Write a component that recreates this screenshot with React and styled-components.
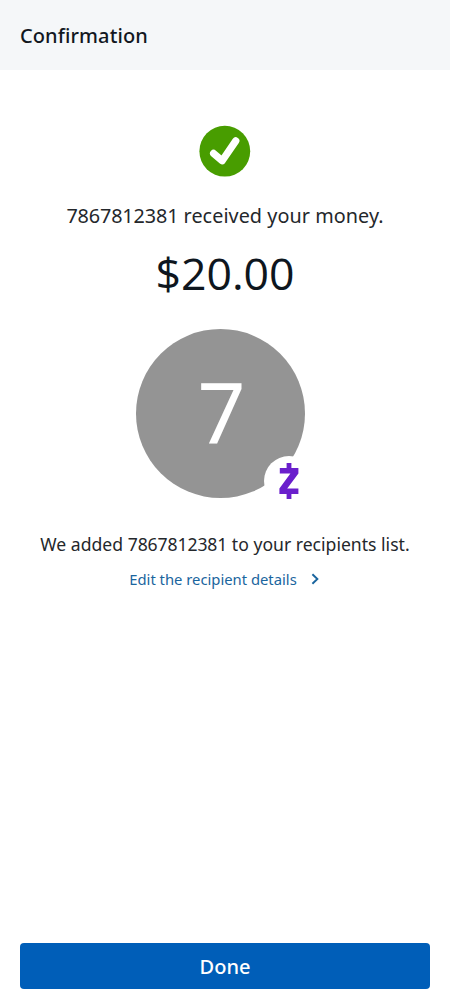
import styled, { createGlobalStyle } from 'styled-components';

export default function App() {
    return (
        <Screen>
            <GlobalStyle />

            <Header>
                <Title>Confirmation</Title>
            </Header>

            <Content>
                <CheckIcon />

                <Message>
                    <Phone>7867812381</Phone> received your money.
                </Message>
                <Amount>$20.00</Amount>

                <Avatar>
                    <Initial>7</Initial>
                    <Badge>
                        <ZelleIcon />
                    </Badge>
                </Avatar>

                <Note>
                    We added <Phone>7867812381</Phone> to your recipients list.
                </Note>
                <EditLink href="#">
                    Edit the recipient details
                    <ChevronIcon />
                </EditLink>
            </Content>

            <Footer>
                <DoneButton>Done</DoneButton>
            </Footer>
        </Screen>
    );
}

function CheckIcon() {
    return (
        <svg width="52" height="52" viewBox="0 0 52 52" fill="none">
            <circle cx="25.8" cy="26.2" r="25.4" fill="#489D00" />
            <path
                d="M14.6 28.4L23.2 35.8L36.8 15.9"
                stroke="#FFFFFF"
                strokeWidth="7.2"
                strokeLinecap="round"
                strokeLinejoin="round"
            />
        </svg>
    );
}

function ZelleIcon() {
    return (
        <svg width="20" height="36" viewBox="0 0 20 36" fill="#6A1FCC">
            <path d="M7.6 0H12.4V5H19.4V10.4L8.2 25.4H19.4V31H12.4V36H7.6V31H0.4V25.6L11.4 10.6H0.8V5H7.6Z" />
        </svg>
    );
}

function ChevronIcon() {
    return (
        <svg width="8" height="12" viewBox="0 0 8 12" fill="none">
            <path d="M1.4 1.2L6.4 6L1.4 10.8" stroke="#1A659E" strokeWidth="1.9" />
        </svg>
    );
}

const GlobalStyle = createGlobalStyle`
    * {
        box-sizing: border-box;
        margin: 0;
        padding: 0;
    }

    body {
        font-family: 'Noto Sans', sans-serif;
        background-color: #FFFFFF;
    }
`;

const Screen = styled.div`
    width: 100%;
    height: 100vh;

    display: flex;
    flex-direction: column;
`;

const Header = styled.header`
    height: 70px;
    padding: 1px 20px 0;

    display: flex;
    align-items: center;

    background-color: #F5F7F9;
`;

const Title = styled.h1`
    font-size: 20px;
    font-weight: 500;
    line-height: 28px;
    letter-spacing: 0.1px;
    color: #12171F;
`;

const Content = styled.main`
    flex: 1;
    padding-top: 55px;

    display: flex;
    flex-direction: column;
    align-items: center;
`;

const Message = styled.p`
    margin-top: 25px;

    font-size: 19.8px;
    line-height: 28px;
    letter-spacing: 0.06px;
    white-space: nowrap;
    color: #24272B;
`;

const Phone = styled.span`
    letter-spacing: -0.006em;
`;

const Amount = styled.p`
    margin-top: 13px;

    font-family: 'Open Sans', 'Noto Sans', sans-serif;
    font-size: 44.6px;
    font-weight: 370;
    line-height: 60px;
    color: #0E161E;
`;

const Avatar = styled.div`
    position: relative;

    width: 169px;
    height: 169px;
    margin: 26px 9px 0 0;

    display: flex;
    align-items: center;
    justify-content: center;

    background-color: #949494;
    border-radius: 50%;
`;

const Initial = styled.span`
    margin: -6px 0 0 2px;

    font-size: 84px;
    line-height: 100px;
    color: #FFFFFF;
`;

const Badge = styled.div`
    position: absolute;
    right: -9px;
    bottom: -8px;

    width: 50px;
    height: 50px;

    display: flex;
    align-items: center;
    justify-content: center;

    background-color: #FFFFFF;
    border-radius: 50%;
`;

const Note = styled.p`
    margin-top: 32px;

    font-size: 17.6px;
    line-height: 28px;
    white-space: nowrap;
    color: #24272B;
`;

const EditLink = styled.a`
    margin: 9px 2px 0 0;

    display: flex;
    align-items: center;
    gap: 14px;

    font-size: 14.8px;
    line-height: 24px;
    text-decoration: none;
    color: #1A659E;
`;

const Footer = styled.footer`
    padding: 0 20px 13px;
`;

const DoneButton = styled.button`
    width: 100%;
    height: 46px;
    padding-top: 1px;

    display: flex;
    align-items: center;
    justify-content: center;

    font-family: inherit;
    font-size: 20px;
    font-weight: 500;
    line-height: 28px;
    color: #FFFFFF;

    background-color: #005EB8;
    border: none;
    border-radius: 4px;
`;
